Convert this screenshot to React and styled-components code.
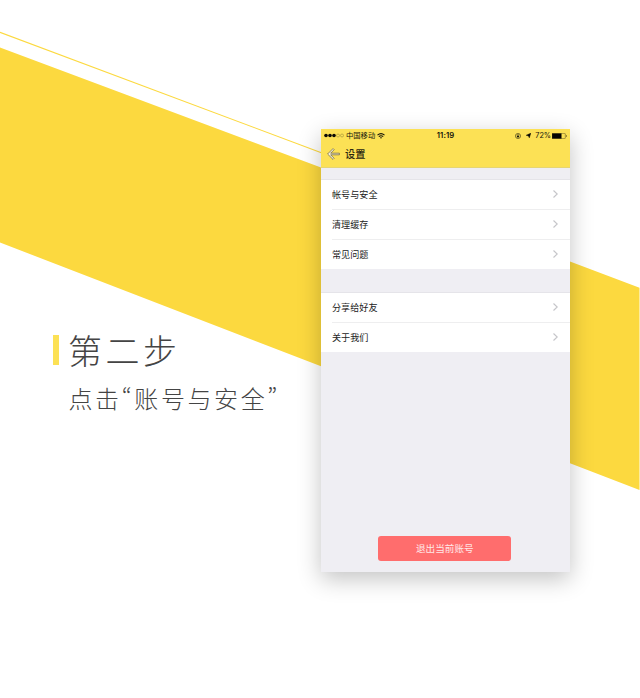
import React from 'react';
import styled, { createGlobalStyle } from 'styled-components';

const GlobalStyle = createGlobalStyle`
  * { box-sizing: border-box; }
  body { margin: 0; background: #fff; font-family: "Noto Sans CJK SC", sans-serif; }
`;

const Page = styled.main`
  position: relative;
  width: 640px;
  height: 698px;
  overflow: hidden;
  display: grid;
  grid-template-columns: 268px 249px;
  padding-left: 53px;
  align-items: start;
  background: #fff;
`;

const Backdrop = styled.svg`
  position: absolute;
  inset: 0;
`;

const Step = styled.section`
  position: relative;
  margin-top: 335px;
  color: #444;
  white-space: nowrap;
`;

const StepHeading = styled.div`
  display: flex;
  align-items: center;
  height: 30px;
  gap: 9px;
`;

const Accent = styled.span`
  width: 6px;
  height: 30px;
  background: #fce155;
`;

const StepTitle = styled.h1`
  margin: 0;
  font-size: 34px;
  font-weight: 300;
  line-height: 30px;
  letter-spacing: 3.5px;
`;

const StepText = styled.p`
  margin: 16px 0 0 15.5px;
  font-size: 24px;
  font-weight: 300;
  line-height: 34px;
  letter-spacing: 2.6px;
`;

const Quote = styled.span`
  font-feature-settings: "pwid";
`;

const Phone = styled.section`
  position: relative;
  display: flex;
  flex-direction: column;
  width: 249px;
  height: 443px;
  margin-top: 129px;
  background: #efeef3;
  box-shadow: 0 7px 22px rgba(0, 0, 0, 0.24);
`;

const Header = styled.header`
  height: 39px;
  background: #fce155;
  border-bottom: 1px solid #e6d574;
`;

const StatusBar = styled.div`
  display: grid;
  grid-template-columns: 1fr auto 1fr;
  align-items: center;
  height: 12px;
  padding: 0 3px;
  font-family: Inter, "Noto Sans CJK SC", sans-serif;
  font-size: 7.3px;
  line-height: 12px;
  color: #15140b;
`;

const StatusGroup = styled.div`
  display: flex;
  align-items: center;
  gap: ${(p) => p.$gap};
  justify-content: ${(p) => (p.$end ? 'flex-end' : 'flex-start')};
`;

const StatusText = styled.span`
  height: 13px;
  line-height: 14px;
`;

const Clock = styled(StatusText)`
  font-size: 7.7px;
  font-weight: 600;
  letter-spacing: 0.1px;
`;

const NavBar = styled.div`
  display: flex;
  align-items: center;
  gap: 5px;
  height: 26px;
  padding-left: 6px;
`;

const NavTitle = styled.h2`
  margin: 0;
  font-size: 10.2px;
  font-weight: 500;
  line-height: 26px;
  color: #2a260f;
`;

const Group = styled.div`
  margin-top: ${(p) => p.$top};
  padding-left: 11px;
  background: #fff;
  border-top: 1px solid #e5e4e9;
`;

const Row = styled.div`
  display: flex;
  align-items: center;
  justify-content: space-between;
  height: 30px;
  padding-right: 12px;
  border-bottom: 1px solid #eeeeef;
  font-size: 9.1px;
  line-height: 29px;
  color: #222;

  &:last-child {
    height: 29px;
    border-bottom: 0;
  }
`;

const LogoutButton = styled.button`
  width: 133px;
  height: 25px;
  margin: auto auto 11px 57.3px;
  padding: 0;
  border: 0;
  border-radius: 3px;
  background: #ff6d6d;
  color: #ffe9e9;
  font-family: inherit;
  font-size: 9.6px;
  line-height: 25px;
`;

const ChevronIcon = styled.svg`
  margin-bottom: 1px;
`;

function Chevron() {
  return (
    <ChevronIcon width="5" height="8" viewBox="0 0 5 8" fill="none">
      <path d="M.5.5 4.2 4 .5 7.5" stroke="#c5c5c9" strokeWidth="1.1" />
    </ChevronIcon>
  );
}

function Signal() {
  return (
    <svg width="20" height="5" viewBox="0 0 20 5">
      {[2, 6, 10].map((x) => <circle key={x} cx={x} cy="2.5" r="1.8" fill="#0b0a05" />)}
      {[14, 18].map((x) => (
        <circle key={x} cx={x} cy="2.5" r="1.5" fill="none" stroke="#8d7e34" strokeWidth=".5" />
      ))}
    </svg>
  );
}

function Wifi() {
  return (
    <svg width="8" height="6" viewBox="0 0 8 6" fill="none" stroke="#15140b">
      <path d="M.5 2.1Q4-.9 7.5 2.1M1.8 3.6Q4 1.8 6.2 3.6" strokeWidth="1.1" />
      <path d="M2.9 4.6Q4 3.9 5.1 4.6L4 5.8Z" fill="#15140b" stroke="none" />
    </svg>
  );
}

function RotationLock() {
  return (
    <svg width="6" height="6" viewBox="0 0 6 6" fill="none" stroke="#15140b">
      <circle cx="3" cy="3" r="2.6" strokeWidth=".5" />
      <path d="M2.2 3V2.1a.8.8 0 0 1 1.6 0V3" strokeWidth=".4" />
      <path d="M1.9 2.7h2.2v1.7H1.9Z" fill="#15140b" stroke="none" />
    </svg>
  );
}

function LocationArrow() {
  return (
    <svg width="5" height="5" viewBox="0 0 5 5">
      <path d="M5 0 3.3 5 2.4 2.9 0 2.3Z" fill="#0b0a05" stroke="#0b0a05" strokeWidth=".3" />
    </svg>
  );
}

function Battery() {
  return (
    <svg width="15" height="6" viewBox="0 0 15 6">
      <rect x=".3" y=".3" width="13" height="5.4" rx=".8" fill="none" stroke="#4a431b" strokeWidth=".5" />
      <rect x=".1" y=".4" width="9.4" height="5.2" fill="#050502" />
      <path d="M14 2v2q.8-.3.8-1T14 2Z" fill="#4a431b" />
    </svg>
  );
}

function BackArrow() {
  return (
    <svg width="13" height="12" viewBox="0 0 13 12" strokeLinejoin="round">
      <path
        d="M.6 6 6 .6 7.1 1.7 3.6 5.2H12.4V6.8H3.6L7.1 10.3 6 11.4Z"
        fill="#fff8dc"
        stroke="#5b563f"
        strokeWidth=".7"
      />
    </svg>
  );
}

const groups = [
  { top: '11px', items: ['帐号与安全', '清理缓存', '常见问题'] },
  { top: '23px', items: ['分享给好友', '关于我们'] },
];

export default function App() {
  return (
    <>
      <GlobalStyle />
      <Page>
        <Backdrop width="640" height="698" viewBox="0 0 640 698">
          <path d="M0 47.5 321 167.5 570 261.5 639.5 287.7V490L570 463.3 321 366.3 0 242.5Z" fill="#fcd93f" />
          <path d="M0 32.3 322 153" stroke="#fcd93f" strokeWidth="1.1" />
        </Backdrop>
        <Step>
          <StepHeading>
            <Accent />
            <StepTitle>第二步</StepTitle>
          </StepHeading>
          <StepText>
            点击<Quote>“</Quote>账号与安全<Quote>”</Quote>
          </StepText>
        </Step>
        <Phone>
          <Header>
            <StatusBar>
              <StatusGroup $gap="2px">
                <Signal />
                <StatusText>中国移动</StatusText>
                <Wifi />
              </StatusGroup>
              <Clock>11:19</Clock>
              <StatusGroup $gap="4.5px" $end>
                <RotationLock />
                <LocationArrow />
                <StatusGroup $gap="1px">
                  <StatusText>72%</StatusText>
                  <Battery />
                </StatusGroup>
              </StatusGroup>
            </StatusBar>
            <NavBar>
              <BackArrow />
              <NavTitle>设置</NavTitle>
            </NavBar>
          </Header>
          {groups.map((group) => (
            <Group key={group.top} $top={group.top}>
              {group.items.map((item) => (
                <Row key={item}>
                  <span>{item}</span>
                  <Chevron />
                </Row>
              ))}
            </Group>
          ))}
          <LogoutButton>退出当前账号</LogoutButton>
        </Phone>
      </Page>
    </>
  );
}
